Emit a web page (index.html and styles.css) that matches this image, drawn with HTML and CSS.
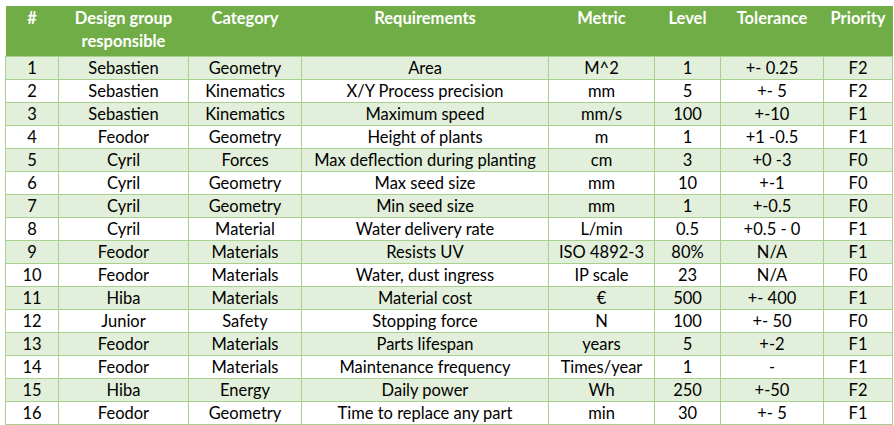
FILE: index.html
```html
<!DOCTYPE html>
<html>
<head>
<meta charset="utf-8">
<link rel="stylesheet" href="styles.css">
</head>
<body>
<table class="req">
<colgroup>
<col class="c-num"><col class="c-grp"><col class="c-cat"><col class="c-req"><col class="c-met"><col class="c-lvl"><col class="c-tol"><col class="c-pri">
</colgroup>
<thead>
<tr><th>#</th><th>Design group responsible</th><th>Category</th><th>Requirements</th><th>Metric</th><th>Level</th><th>Tolerance</th><th>Priority</th></tr>
</thead>
<tbody>
<tr><td>1</td><td>Sebastien</td><td>Geometry</td><td>Area</td><td>M^2</td><td>1</td><td>+- 0.25</td><td>F2</td></tr>
<tr><td>2</td><td>Sebastien</td><td>Kinematics</td><td>X/Y Process precision</td><td>mm</td><td>5</td><td>+- 5</td><td>F2</td></tr>
<tr><td>3</td><td>Sebastien</td><td>Kinematics</td><td>Maximum speed</td><td>mm/s</td><td>100</td><td>+-10</td><td>F1</td></tr>
<tr><td>4</td><td>Feodor</td><td>Geometry</td><td>Height of plants</td><td>m</td><td>1</td><td>+1 -0.5</td><td>F1</td></tr>
<tr><td>5</td><td>Cyril</td><td>Forces</td><td>Max deflection during planting</td><td>cm</td><td>3</td><td>+0 -3</td><td>F0</td></tr>
<tr><td>6</td><td>Cyril</td><td>Geometry</td><td>Max seed size</td><td>mm</td><td>10</td><td>+-1</td><td>F0</td></tr>
<tr><td>7</td><td>Cyril</td><td>Geometry</td><td>Min seed size</td><td>mm</td><td>1</td><td>+-0.5</td><td>F0</td></tr>
<tr><td>8</td><td>Cyril</td><td>Material</td><td>Water delivery rate</td><td>L/min</td><td>0.5</td><td>+0.5 - 0</td><td>F1</td></tr>
<tr><td>9</td><td>Feodor</td><td>Materials</td><td>Resists UV</td><td>ISO 4892-3</td><td>80%</td><td>N/A</td><td>F1</td></tr>
<tr><td>10</td><td>Feodor</td><td>Materials</td><td>Water, dust ingress</td><td>IP scale</td><td>23</td><td>N/A</td><td>F0</td></tr>
<tr><td>11</td><td>Hiba</td><td>Materials</td><td>Material cost</td><td>€</td><td>500</td><td>+- 400</td><td>F1</td></tr>
<tr><td>12</td><td>Junior</td><td>Safety</td><td>Stopping force</td><td>N</td><td>100</td><td>+- 50</td><td>F0</td></tr>
<tr><td>13</td><td>Feodor</td><td>Materials</td><td>Parts lifespan</td><td>years</td><td>5</td><td>+-2</td><td>F1</td></tr>
<tr><td>14</td><td>Feodor</td><td>Materials</td><td>Maintenance frequency</td><td>Times/year</td><td>1</td><td>-</td><td>F1</td></tr>
<tr><td>15</td><td>Hiba</td><td>Energy</td><td>Daily power</td><td>Wh</td><td>250</td><td>+-50</td><td>F2</td></tr>
<tr><td>16</td><td>Feodor</td><td>Geometry</td><td>Time to replace any part</td><td>min</td><td>30</td><td>+- 5</td><td>F1</td></tr>
</tbody>
</table>
</body>
</html>
```
FILE: styles.css
```css
html, body {
  margin: 0;
  padding: 0;
  background: #ffffff;
}
body {
  padding: 6px 0 0 5px;
  font-family: "Lato", "Liberation Sans", sans-serif;
  font-size: 16.5px;
  color: #000000;
}
.req {
  border-collapse: collapse;
  table-layout: fixed;
  width: 887px;
}
.c-num { width: 53px; }
.c-grp { width: 130px; }
.c-cat { width: 113px; }
.c-req { width: 247px; }
.c-met { width: 106px; }
.c-lvl { width: 66px; }
.c-tol { width: 103px; }
.c-pri { width: 69px; }
.req th {
  background: #70ad47;
  color: #ffffff;
  font-weight: bold;
  vertical-align: top;
  text-align: center;
  height: 50px;
  padding: 1px 0 0 0;
  line-height: 23px;
  box-sizing: border-box;
  border: none;
}
.req td {
  border: 1px solid #a9d08e;
  text-align: center;
  vertical-align: middle;
  height: 22px;
  padding: 0;
  line-height: 22px;
  white-space: nowrap;
}
.req tbody tr:nth-child(odd) td {
  background: #e2efda;
}
```
